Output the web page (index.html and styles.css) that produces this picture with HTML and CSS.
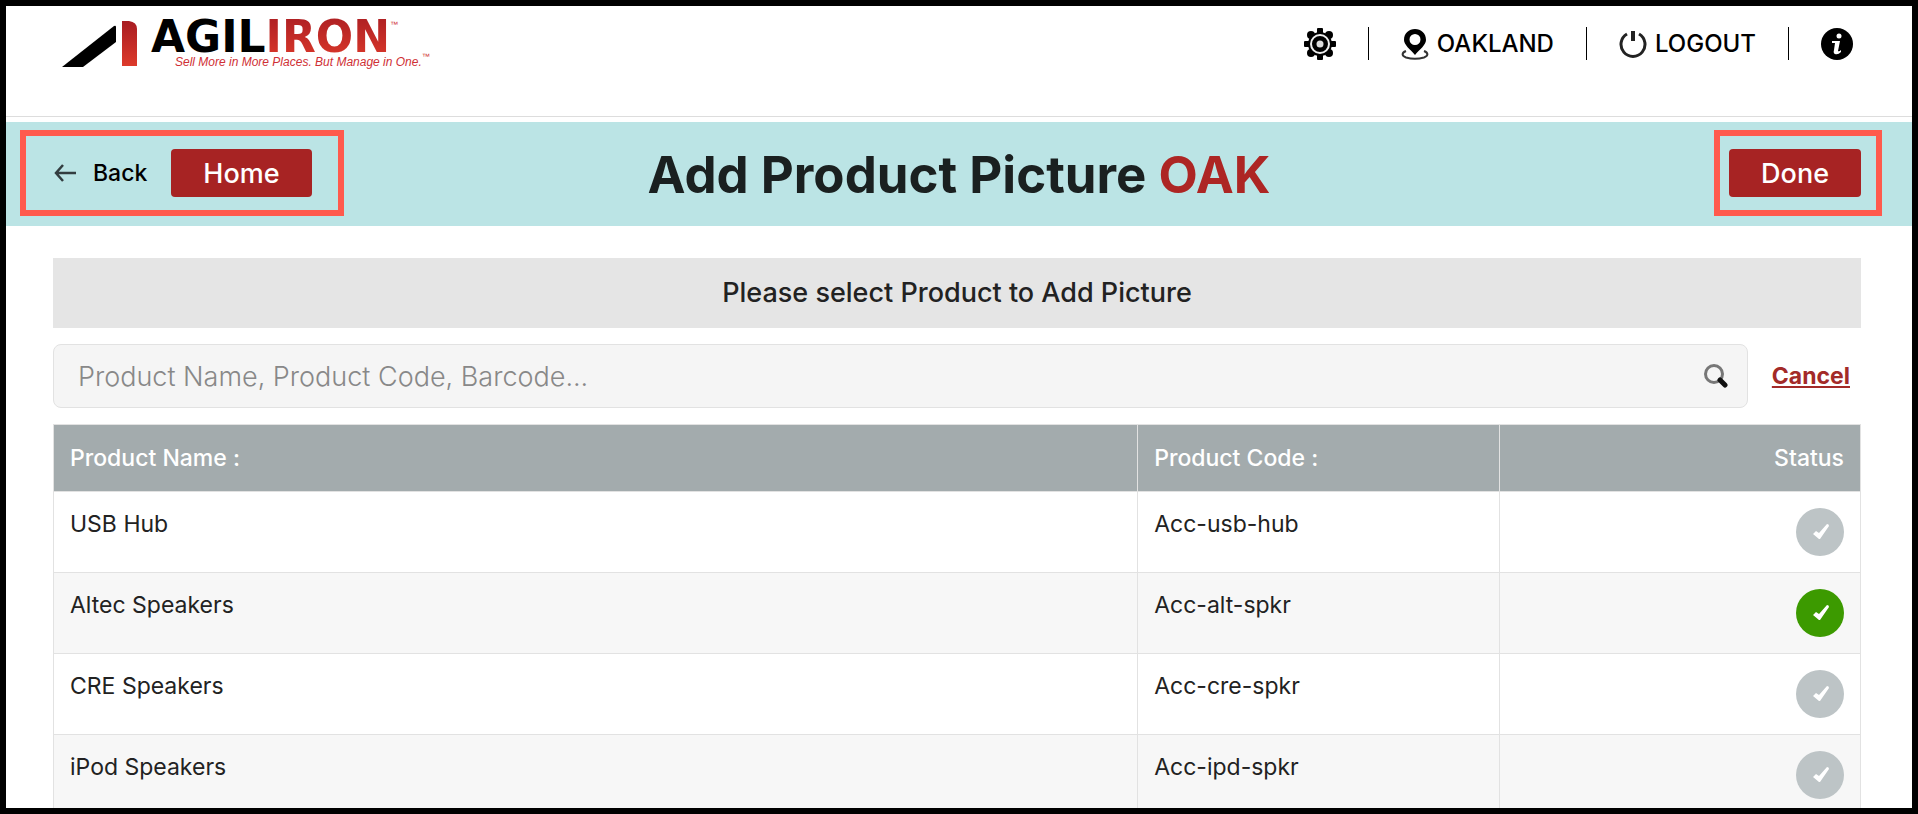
FILE: index.html
```html
<!DOCTYPE html>
<html lang="en">
<head>
<meta charset="UTF-8">
<meta name="viewport" content="width=device-width, initial-scale=1.0">
<title>Add Product Picture</title>
<link rel="stylesheet" href="styles.css">
</head>
<body>
<div class="page">

  <header class="header">
    <a class="logo" href="#">
      <svg class="logo-mark" width="76" height="46" viewBox="0 0 76 46" aria-hidden="true">
        <defs>
          <linearGradient id="red" x1="0" y1="0" x2="0" y2="1">
            <stop offset="0" stop-color="#a81c22"/>
            <stop offset="1" stop-color="#dd3a2b"/>
          </linearGradient>
        </defs>
        <path d="M0 46 L52 5 Q54 4 54 6 V21 L21 46 Z" fill="#000"/>
        <path d="M60 0 H67 Q75 1 75 8 V45 H60 Z" fill="url(#red)"/>
      </svg>
      <span class="logo-text">
        <span class="logo-name">AGIL<span class="logo-iron">IRON</span><sup>™</sup></span>
        <span class="logo-tagline">Sell More in More Places. But Manage in One.<sup>™</sup></span>
      </span>
    </a>

    <nav class="nav">
      <a href="#" aria-label="Settings">
        <svg width="32" height="32" viewBox="0 0 32 32">
          <g fill="#000">
            <rect x="13" y="0" width="6" height="32" rx="1"/>
            <rect x="0" y="13" width="32" height="6" rx="1"/>
            <circle cx="7" cy="7" r="4"/>
            <circle cx="25" cy="7" r="4"/>
            <circle cx="7" cy="25" r="4"/>
            <circle cx="25" cy="25" r="4"/>
            <circle cx="16" cy="16" r="12"/>
          </g>
          <circle cx="16" cy="16" r="9" fill="none" stroke="#eee" stroke-width="2"/>
          <circle cx="16" cy="16" r="3.500" fill="#ddd"/>
        </svg>
      </a>
      <a href="#">
        <svg width="28" height="32" viewBox="0 0 28 32" aria-hidden="true">
          <path fill="#000" fill-rule="evenodd" d="M14 1 C8 1 3 5 3 12 C3 17 9 21 14 27 C19 21 25 17 25 12 C25 5 20 1 14 1 Z M14 6 A5.5 5.5 0 1 1 14 17 A5.5 5.5 0 1 1 14 6 Z"/>
          <path fill="none" stroke="#333" stroke-width="2" d="M5 23 C0 25 1 28 5 29.500 C10 31 18 31 23 29.500 C27 28 28 25 23 23"/>
        </svg>
        OAKLAND
      </a>
      <a href="#">
        <svg width="28" height="28" viewBox="0 0 28 28" aria-hidden="true">
          <path fill="none" stroke="#222" stroke-width="3" d="M8 4 A12 12 0 1 0 20 4"/>
          <path fill="none" stroke="#222" stroke-width="4" d="M14 1 V11"/>
        </svg>
        LOGOUT
      </a>
      <a href="#" aria-label="Information">
        <svg width="32" height="32" viewBox="0 0 32 32">
          <circle cx="16" cy="16" r="16" fill="#000"/>
          <circle cx="18" cy="8" r="2.500" fill="#fff"/>
          <path fill="#fff" d="M11 13 H19 L17 23 Q18 24 20 22 V24 Q17 27 14 26 Q12 25 13 22 L14 15 H11 Z"/>
        </svg>
      </a>
    </nav>
  </header>

  <section class="banner">
    <div class="highlight highlight-left">
      <a class="back" href="#">
        <svg width="22" height="18" viewBox="0 0 22 18" fill="none" stroke="#333d40" stroke-width="2.500" aria-hidden="true">
          <path d="M22 9 H2 M9 1 L2 9 L9 17"/>
        </svg>
        Back
      </a>
      <button class="btn" type="button">Home</button>
    </div>
    <h1>Add Product Picture <span>OAK</span></h1>
    <div class="highlight highlight-right">
      <button class="btn" type="button">Done</button>
    </div>
  </section>

  <main class="content">
    <h2>Please select Product to Add Picture</h2>

    <form class="search">
      <div class="search-box">
        <input type="text" aria-label="Search products" placeholder="Product Name, Product Code, Barcode...">
        <button class="search-button" type="button" aria-label="Search">
          <svg width="24" height="24" viewBox="0 0 24 24" fill="none">
            <circle cx="10" cy="10" r="8.500" stroke="#777" stroke-width="3"/>
            <path d="M16 16 L21 21" stroke="#111" stroke-width="5" stroke-linecap="round"/>
          </svg>
        </button>
      </div>
      <a class="cancel" href="#">Cancel</a>
    </form>

    <svg class="defs" width="0" height="0" aria-hidden="true">
      <symbol id="check" viewBox="0 0 48 48">
        <path fill="#fff" d="M17 26 L20 23 L23 25 L31 16 Q33 16 33 18 L24 31 H23 Z"/>
      </symbol>
    </svg>

    <table class="products">
      <thead>
        <tr>
          <th class="col-name">Product Name :</th>
          <th class="col-code">Product Code :</th>
          <th class="col-status">Status</th>
        </tr>
      </thead>
      <tbody>
        <tr>
          <td>USB Hub</td>
          <td>Acc-usb-hub</td>
          <td><svg class="status" role="img" aria-label="No picture"><use href="#check"/></svg></td>
        </tr>
        <tr>
          <td>Altec Speakers</td>
          <td>Acc-alt-spkr</td>
          <td><svg class="status done" role="img" aria-label="Picture added"><use href="#check"/></svg></td>
        </tr>
        <tr>
          <td>CRE Speakers</td>
          <td>Acc-cre-spkr</td>
          <td><svg class="status" role="img" aria-label="No picture"><use href="#check"/></svg></td>
        </tr>
        <tr>
          <td>iPod Speakers</td>
          <td>Acc-ipd-spkr</td>
          <td><svg class="status" role="img" aria-label="No picture"><use href="#check"/></svg></td>
        </tr>
      </tbody>
    </table>
  </main>

</div>
</body>
</html>
```
FILE: styles.css
```css
* {
  box-sizing: border-box;
  margin: 0;
  padding: 0;
}

body {
  font-family: Inter, "Open Sans", sans-serif;
  font-size: 23px;
  line-height: 32px;
  color: #222;
  background-color: #fff;
}

a {
  color: #000;
  text-decoration: none;
}

svg {
  display: block;
  flex-shrink: 0;
}

.page {
  height: 100vh;
  overflow: hidden;
  border: 6px solid #000;
}

/* Header */

.header {
  display: flex;
  justify-content: space-between;
  align-items: flex-start;
  height: 111px;
  padding: 15px 59px 0 56px;
  border-bottom: 1px solid #ddd;
}

.logo {
  display: flex;
  gap: 13px;
}

.logo-text {
  display: flex;
  flex-direction: column;
}

.logo-name {
  font-family: "DejaVu Sans", sans-serif;
  font-size: 44px;
  font-weight: bold;
  line-height: 32px;
}

.logo-iron {
  color: transparent;
  background: linear-gradient(#a81c22, #dd3a2b);
  background-clip: text;
}

.logo sup {
  font-family: "Liberation Sans", Arial, sans-serif;
  font-size: 8px;
  font-weight: normal;
  line-height: 8px;
  vertical-align: top;
  color: #cf3035;
}

.logo-tagline {
  padding-left: 24px;
  font-family: "Liberation Sans", Arial, sans-serif;
  font-size: 12px;
  font-style: italic;
  line-height: 18px;
  color: #cf3035;
}

.nav {
  display: flex;
  padding-top: 6px;
}

.nav a {
  display: flex;
  align-items: center;
  gap: 8px;
  height: 33px;
  padding-left: 32px;
  font-size: 24px;
  font-weight: 500;
}

.nav a + a {
  margin-left: 32px;
  border-left: 1px solid #000;
}

/* Banner */

.banner {
  display: grid;
  grid-template-columns: 1fr auto 1fr;
  align-items: start;
  height: 104px;
  margin-top: 5px;
  padding: 8px 14px 0;
  background-color: #bbe4e5;
}

.banner h1 {
  font-size: 51px;
  line-height: 90px;
  color: #1a2020;
}

.banner h1 span {
  color: #ad2624;
}

.highlight {
  display: flex;
  align-items: center;
  height: 86px;
  border: 6px solid #ff5a4d;
}

.highlight-left {
  justify-self: start;
  gap: 24px;
  padding: 0 26px 0 28px;
}

.highlight-right {
  justify-self: end;
  margin-right: 16px;
  padding: 0 15px 0 9px;
}

.back {
  display: flex;
  align-items: center;
  gap: 17px;
  font-weight: 500;
}

.btn {
  height: 48px;
  padding: 0 32px;
  font-family: inherit;
  font-size: 27px;
  font-weight: 500;
  color: #fff;
  background-color: #a72323;
  border: none;
  border-radius: 4px;
  cursor: pointer;
}

/* Content */

.content {
  padding: 32px 51px 0 47px;
}

.content h2 {
  padding: 19px;
  font-size: 27px;
  font-weight: 500;
  text-align: center;
  background-color: #e5e5e5;
}

.search {
  display: flex;
  align-items: center;
  margin: 16px 0;
}

.search-box {
  display: flex;
  flex: 1;
  height: 64px;
  background-color: #f5f5f5;
  border: 1px solid #e2e2e2;
  border-radius: 8px;
}

.search-box input {
  flex: 1;
  padding-left: 24px;
  font-family: inherit;
  font-size: 27px;
  font-weight: 300;
  background: none;
  border: none;
  outline: none;
}

.search-box input::placeholder {
  color: #888;
}

.search-button {
  padding: 0 19px;
  background: none;
  border: none;
  cursor: pointer;
}

.cancel {
  padding: 0 11px 0 24px;
  font-weight: bold;
  color: #a32a28;
  text-decoration: underline;
}

/* Table */

.products {
  width: 100%;
  table-layout: fixed;
  border-collapse: collapse;
}

.products th,
.products td {
  padding: 16px;
  text-align: left;
  vertical-align: top;
  border: 1px solid #e2e2e2;
}

.products th {
  padding: 17px 16px;
  font-weight: 500;
  color: #fff;
  background-color: #a3abad;
}

.products td {
  height: 81px;
}

.products tbody tr:nth-child(even) {
  background-color: #f7f7f7;
}

.products .col-name {
  width: 60%;
}

.products .col-code {
  width: 20%;
}

.products .col-status {
  text-align: right;
}

.status {
  width: 48px;
  height: 48px;
  margin-left: auto;
  background-color: #bdc4c6;
  border-radius: 50%;
}

.status.done {
  background-color: #3c9a00;
}

.defs {
  position: absolute;
}
```
